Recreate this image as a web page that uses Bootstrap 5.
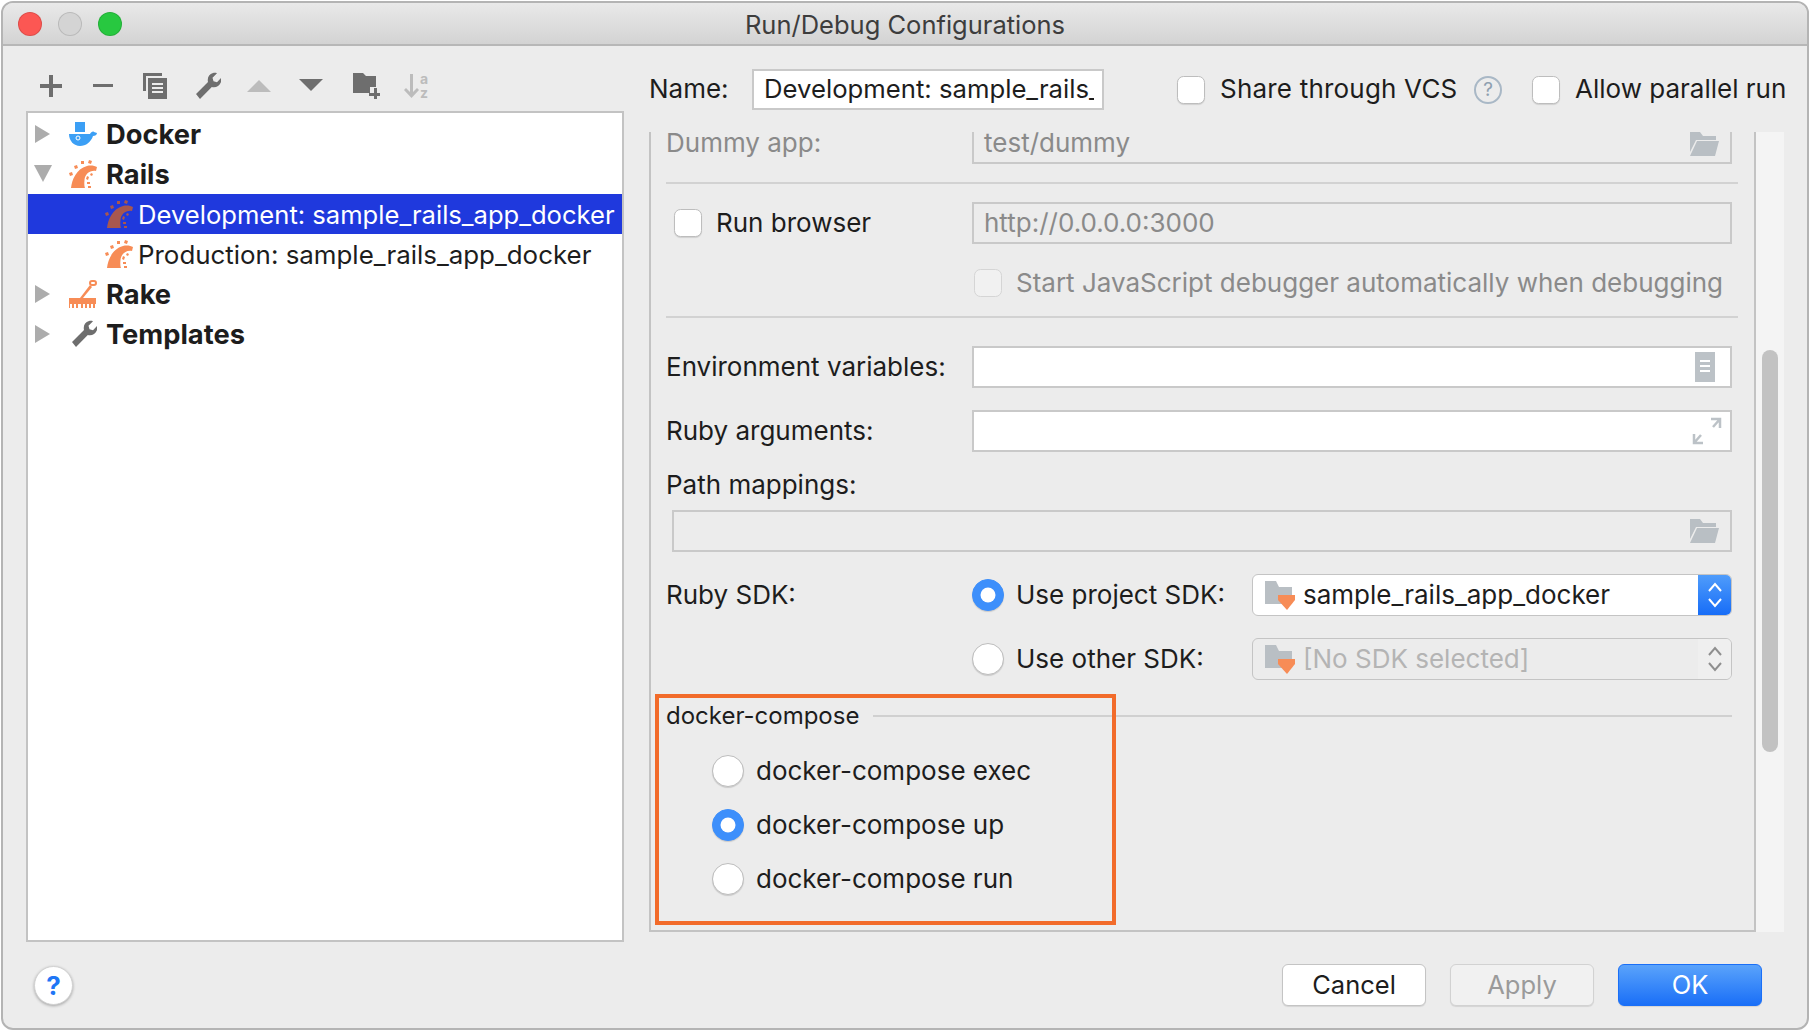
<!DOCTYPE html>
<html lang="en">
<head>
    <meta charset="UTF-8">
    <title>Run/Debug Configurations</title>
    <link href="https://cdn.jsdelivr.net/npm/bootstrap@5.3.2/dist/css/bootstrap.min.css" rel="stylesheet">
    <style>
        html, body { height: 100%; }
        body {
            background: #fff;
            font-family: Inter, "Liberation Sans", sans-serif;
            font-size: 26px;
            line-height: 30px;
            color: #1d1d1d;
            overflow: hidden;
        }
        .win-frame {
            margin: 1px;
            width: 1808px;
            height: 1029px;
            background: #ececec;
            border: 2px solid #b4b4b4;
            border-radius: 12px;
            overflow: hidden;
        }
        .title-strip {
            height: 43px;
            flex: none;
            background: linear-gradient(#e9e9e9, #d3d3d3);
            border-bottom: 2px solid #b7b7b7;
            position: relative;
        }
        .title-text { color: #3d3d3d; font-size: 25.5px; line-height: 43px; }
        .light-dots { position: absolute; left: 15px; top: 9px; gap: 16px; }
        .light-dot { width: 24px; height: 24px; border-radius: 50%; border: 1px solid rgba(0,0,0,.12); }
        .left-pane { width: 598px; margin-left: 23px; flex: none; }
        .tool-strip { height: 65px; padding: 26px 0 0 11px; gap: 24px; }
        .tool-strip svg { width: 28px; height: 28px; flex: none; }
        .tree-box {
            height: 831px;
            background: #fff;
            border: 2px solid #c3c3c3;
            padding-top: 1px;
        }
        .tree-row {
            height: 40px;
            padding: 2px 0 0 5px;
            border: 0;
            border-radius: 0 !important;
            background: transparent;
            color: #1d1d1d;
            font-size: 25.9px;
            line-height: 38px;
            white-space: nowrap;
        }
        .tree-row.is-parent { font-weight: 700; font-size: 27.3px; }
        .tree-row.is-leaf { padding-left: 77px; }
        .tree-row.is-picked { background: #1f39dd; color: #fff; font-size: 25.6px; }
        .tree-arrow { width: 20px; height: 20px; margin: -2px 16px 0 0; flex: none; }
        .tree-icon { width: 28px; height: 28px; margin: -2px 9px 0 0; flex: none; }
        .is-leaf .tree-icon { margin-right: 5px; }
        .right-pane { width: 1135px; margin-left: 25px; padding-top: 23px; flex: none; }
        .name-row { height: 41px; }
        .name-row > div { flex: none; white-space: nowrap; padding-bottom: 2px; }
        .name-label { width: 103px; }
        .name-field {
            width: 352px;
            height: 41px;
            flex: none;
            font-size: 25.7px;
            line-height: 30px;
            padding: 3px 8px 5px 10px;
            border: 2px solid #c9c9c9;
            border-radius: 0;
            color: #1d1d1d;
            overflow: hidden;
        }
        .mac-check {
            width: 28px;
            height: 28px;
            margin: 0;
            flex: none;
            background-color: #fff;
            border: 1px solid #bdbdbd;
            border-radius: 6px;
            box-shadow: 0 1px 1px rgba(0,0,0,.12);
        }
        .mac-check:disabled { background-color: #f1f1f1; border-color: #d5d5d5; opacity: 1; box-shadow: none; }
        .mac-radio {
            width: 32px;
            height: 32px;
            margin: 0;
            flex: none;
            background-color: #fff;
            border: 1px solid #bdbdbd;
            box-shadow: 0 1px 1px rgba(0,0,0,.15);
        }
        .mac-radio:checked { background-color: #3d8ffb; border-color: #3d8ffb; }
        .name-row > .hint-mark {
            width: 28px;
            height: 28px;
            padding: 0;
            border: 2px solid #a9b8c6;
            border-radius: 50%;
            color: #8fa0b0;
            font-size: 19px;
            line-height: 24px;
            text-align: center;
        }
        .vcs-label { width: 239px; letter-spacing: .2px; }
        .config-panel {
            height: 800px;
            margin-top: 22px;
            background: #f4f4f4;
        }
        .config-inner {
            width: 1107px;
            background: #ececec;
            border: 2px solid #c3c3c3;
            border-top: 0;
            padding-left: 15px;
        }
        .scroll-track { width: 28px; padding-left: 6px; padding-top: 218px; }
        .scroll-thumb { width: 16px; height: 402px; background: #c2c2c2; border-radius: 8px; }
        .row-label { width: 306px; flex: none; }
        .muted-text { color: #8a8a8a; }
        .plain-field {
            width: 760px;
            height: 42px;
            flex: none;
            border: 2px solid #c9c9c9;
            padding: 0 10px;
            line-height: 38px;
        }
        .plain-field.is-white { background: #fff; }
        .plain-field svg { width: 32px; height: 32px; }
        .dummy-field { height: 32px; border-top: 0; line-height: 22px; padding-top: 0; }
        .dummy-field svg { margin-top: -4px; }
        .dummy-row { line-height: 22px; }
        .sep-line { width: 1072px; height: 2px; background: #d2d2d2; margin-top: 18px; }
        .sdk-box {
            width: 480px;
            height: 42px;
            margin-left: auto;
            flex: none;
            background: #fff;
            border: 1px solid #c4c4c4;
            border-radius: 6px;
            overflow: hidden;
        }
        .sdk-box.is-off { background: #ececec; color: #b4b4b4; }
        .sdk-name { flex: 1; padding-left: 11px; line-height: 40px; gap: 7px; }
        .sdk-name svg { width: 32px; height: 32px; }
        .sdk-spin { width: 33px; background: linear-gradient(#4f9cfb, #176df7); }
        .sdk-box.is-off .sdk-spin { background: #efefef; }
        .sdk-spin svg { width: 20px; height: 30px; }
        .sdk-col { width: 760px; flex: none; gap: 12px; }
        .group-wrap { position: relative; height: 30px; margin-top: 21px; font-size: 24px; }
        .group-rule { height: 2px; background: #d0d0d0; width: 859px; margin-left: 14px; }
        .note-box {
            position: absolute;
            left: -11px;
            top: -7px;
            width: 461px;
            height: 231px;
            border: 4px solid #f26b2a;
        }
        .radio-row { height: 32px; margin-left: 46px; gap: 12px; }
        .foot-bar { height: 84px; padding: 2px 45px 0 31px; }
        .help-round {
            width: 39px;
            height: 39px;
            background: #fff;
            border-radius: 50%;
            border: 1px solid #d2d2d2;
            box-shadow: 0 1px 3px rgba(0,0,0,.3);
            color: #1f76f5;
            font-weight: 700;
            font-size: 26px;
            line-height: 37px;
            text-align: center;
        }
        .dlg-btn {
            width: 144px;
            height: 42px;
            padding: 0;
            font-size: 25.5px;
            line-height: 38px;
            border-radius: 6px;
            background: #fff;
            border: 1px solid #c4c4c4;
            color: #1d1d1d;
            box-shadow: 0 1px 1px rgba(0,0,0,.1);
        }
        .dlg-btn:disabled { background: #f1f1f1; color: #9a9a9a; border-color: #d2d2d2; opacity: 1; }
        .dlg-btn.btn-primary { background: linear-gradient(#5aa3fb, #1a6ff7); border-color: #1a6ff7; color: #fff; }
    </style>
</head>
<body>
    <svg width="0" height="0" class="position-absolute">
        <defs>
            <symbol id="ic-rails" viewBox="0 0 28 28">
                <path d="M2 28C3 20 7 9 18 6c4-1 8 0 10 1l-1 4c-6-1-11 3-11.500 9-.5 4 0 7 .5 8z"/>
                <path d="M0 13l3-1 1 3-3 1zM5 6l3-1 1 3-3 1zM12 1l3 0 0 3-3 0zM20 0l3 1-1 3-3-1zM22 13l2 1-1 2-2-1zM18 16l2 1-1 3-2-1zM18 22l3 0 0 2-3 0zM19 26l3 0 0 2-3 0z"/>
            </symbol>
            <symbol id="ic-wrench" viewBox="0 0 28 28">
                <path d="M3 22L15 10c-1-4 1-8 5-9 1.500-.4 3-.2 4 .2l-4.500 4.500 1 3.500 3.500 1L28 6c.4 1.500.4 3-.2 4.500-1.500 3.500-5 5.500-9 4.500L7 27z"/>
            </symbol>
            <symbol id="ic-open" viewBox="0 0 32 32">
                <path d="M2 4h10l3 4h13v4H8L2 24z" fill="#b9bfc4"/>
                <path d="M9 13h22l-4 15H2z" fill="#b9bfc4"/>
            </symbol>
            <symbol id="ic-sdk" viewBox="0 0 32 32">
                <path d="M1 2h11l3 6h13v17H1z" fill="#b9bfc4"/>
                <path d="M14 16h17v5l-8 10-9-10z" fill="#f78c56"/>
            </symbol>
            <symbol id="ic-spin" viewBox="0 0 20 30">
                <path d="M4 11l6-7 6 7M4 19l6 7 6-7" fill="none" stroke="currentColor" stroke-width="2"/>
            </symbol>
            <symbol id="ic-right" viewBox="0 0 20 20"><path d="M2 1l15 9-15 9z" fill="#acacac"/></symbol>
            <symbol id="ic-down" viewBox="0 0 20 20"><path d="M1 1h18l-9 17z" fill="#acacac"/></symbol>
        </defs>
    </svg>

    <div class="win-frame d-flex flex-column">
        <div class="title-strip text-center">
            <div class="light-dots d-flex">
                <div class="light-dot" style="background:#fc5753"></div>
                <div class="light-dot" style="background:#d4d4d4"></div>
                <div class="light-dot" style="background:#28c840"></div>
            </div>
            <div class="title-text">Run/Debug Configurations</div>
        </div>

        <div class="d-flex align-items-start">
            <div class="left-pane">
                <div class="tool-strip d-flex">
                    <svg viewBox="0 0 28 28" fill="#6e6e6e"><path d="M12 3h4v9h9v4h-9v9h-4v-9H3v-4h9z"/></svg>
                    <svg viewBox="0 0 28 28" fill="#6e6e6e"><path d="M4 12h20v3H4z"/></svg>
                    <svg viewBox="0 0 28 28" fill="#6e6e6e"><path d="M2 1h19v3H5v15H2z"/><path d="M7 6h19v21H7zM11 11v2h11v-2zM11 15v2h11v-2zM11 19v2h11v-2z" fill-rule="evenodd"/></svg>
                    <svg style="fill:#6e6e6e"><use href="#ic-wrench"/></svg>
                    <svg viewBox="0 0 28 28" fill="#bcbcbc"><path d="M2 20L14 8l12 12z"/></svg>
                    <svg viewBox="0 0 28 28" fill="#6e6e6e"><path d="M2 7h24L14 19z"/></svg>
                    <svg style="margin-left:3px" viewBox="0 0 28 28" fill="#6e6e6e"><path d="M1 1h10l3 3h10v11h-6v6H1z"/><path d="M23 18h3v5h3v3h-3v3h-3v-3h-5v-3h5z" transform="translate(-1 -2)"/></svg>
                    <svg viewBox="0 0 28 28" fill="#bcbcbc"><path d="M6 2h3v18l4-4 2 2-7.500 8L0 18l2-2 4 4z"/><text x="16" y="12" font-size="14" font-weight="700" font-family="Inter, sans-serif">a</text><text x="16" y="26" font-size="14" font-weight="700" font-family="Inter, sans-serif">z</text></svg>
                </div>
                <div class="tree-box">
                    <ul class="list-group">
                        <li class="list-group-item tree-row is-parent d-flex align-items-center">
                            <svg class="tree-arrow"><use href="#ic-right"/></svg>
                            <svg class="tree-icon" viewBox="0 0 28 28">
                                <path d="M6 2h10v10H6z" fill="#3b9ff5"/>
                                <path d="M0 14h21c1-2 3-3 4-2l3 1c0 2-2 3-4 3-2 6-7 10-13 10C5 26 0 21 0 14z" fill="#3b9ff5"/>
                                <circle cx="9" cy="18" r="2" fill="none" stroke="#fff"/>
                            </svg>
                            Docker
                        </li>
                        <li class="list-group-item tree-row is-parent d-flex align-items-center">
                            <svg class="tree-arrow"><use href="#ic-down"/></svg>
                            <svg class="tree-icon" style="fill:#f78c56"><use href="#ic-rails"/></svg>
                            Rails
                        </li>
                        <li class="list-group-item tree-row is-leaf is-picked d-flex align-items-center">
                            <svg class="tree-icon" style="fill:#a8574f"><use href="#ic-rails"/></svg>
                            Development: sample_rails_app_docker
                        </li>
                        <li class="list-group-item tree-row is-leaf d-flex align-items-center">
                            <svg class="tree-icon" style="fill:#f78c56"><use href="#ic-rails"/></svg>
                            Production: sample_rails_app_docker
                        </li>
                        <li class="list-group-item tree-row is-parent d-flex align-items-center">
                            <svg class="tree-arrow"><use href="#ic-right"/></svg>
                            <svg class="tree-icon" viewBox="0 0 28 28" fill="#f78c56">
                                <path d="M11 18L21 5l2 2-9 11z"/>
                                <rect x="21" y="1" width="6" height="4" rx="2" fill="none" stroke="#f78c56" stroke-width="2"/>
                                <path d="M0 18h27v6h-1v4h-2v-4h-2v4h-2v-4h-2v4h-2v-4h-2v4h-2v-4H9v4H7v-4H5v4H3v-4H1v4H0z"/>
                            </svg>
                            Rake
                        </li>
                        <li class="list-group-item tree-row is-parent d-flex align-items-center">
                            <svg class="tree-arrow"><use href="#ic-right"/></svg>
                            <svg class="tree-icon" style="fill:#6e6e6e"><use href="#ic-wrench"/></svg>
                            Templates
                        </li>
                    </ul>
                </div>
            </div>

            <div class="right-pane">
                <div class="name-row d-flex align-items-center">
                    <div class="name-label">Name:</div>
                    <input class="form-control name-field" type="text" value="Development: sample_rails_app_docker">
                    <input class="form-check-input mac-check" style="margin-left:73px" type="checkbox">
                    <div class="vcs-label" style="margin-left:15px">Share through VCS</div>
                    <div class="hint-mark" style="margin-left:15px">?</div>
                    <input class="form-check-input mac-check" style="margin-left:30px" type="checkbox">
                    <div style="margin-left:15px">Allow parallel run</div>
                </div>

                <div class="config-panel d-flex">
                    <div class="config-inner">
                        <div class="dummy-row d-flex">
                            <div class="row-label muted-text">Dummy app:</div>
                            <div class="plain-field dummy-field muted-text d-flex justify-content-between">
                                <span>test/dummy</span>
                                <svg><use href="#ic-open"/></svg>
                            </div>
                        </div>
                        <div class="sep-line"></div>

                        <div class="d-flex align-items-center" style="margin-top:18px">
                            <div class="row-label d-flex align-items-center gap-2">
                                <input class="form-check-input mac-check ms-2" type="checkbox">
                                <span style="margin-left:6px">Run browser</span>
                            </div>
                            <div class="plain-field muted-text">http://0.0.0.0:3000</div>
                        </div>
                        <div class="d-flex align-items-center" style="margin-top:25px;padding-left:308px;height:28px">
                            <input class="form-check-input mac-check" type="checkbox" disabled>
                            <span class="muted-text text-nowrap" style="margin-left:14px">Start JavaScript debugger automatically when debugging</span>
                        </div>
                        <div class="sep-line" style="margin-top:19px"></div>

                        <div class="d-flex align-items-center" style="margin-top:28px">
                            <div class="row-label">Environment variables:</div>
                            <div class="plain-field is-white d-flex justify-content-end align-items-center">
                                <svg viewBox="0 0 32 32"><path d="M7 1h20v30H7zM12 9v2h10V9zM12 14v2h10v-2zM12 19v2h10v-2z" fill="#bcc2c7" fill-rule="evenodd"/></svg>
                            </div>
                        </div>
                        <div class="d-flex align-items-center" style="margin-top:22px">
                            <div class="row-label">Ruby arguments:</div>
                            <div class="plain-field is-white d-flex justify-content-end align-items-center">
                                <svg style="margin-right:-3px" viewBox="0 0 32 32"><path d="M20 4h9v9M29 4l-7 8M12 28H3v-9M3 28l7-8" fill="none" stroke="#bcc2c7" stroke-width="2.500"/></svg>
                            </div>
                        </div>
                        <div style="margin-top:18px">Path mappings:</div>
                        <div class="plain-field d-flex justify-content-end align-items-center" style="margin:10px 0 0 6px;width:1060px">
                            <svg><use href="#ic-open"/></svg>
                        </div>

                        <div class="d-flex align-items-center" style="margin-top:22px;height:42px">
                            <div class="row-label">Ruby SDK:</div>
                            <div class="sdk-col d-flex align-items-center">
                                <input class="form-check-input mac-radio" type="radio" name="sdk" checked>
                                <span class="text-nowrap">Use project SDK:</span>
                                <div class="sdk-box d-flex">
                                    <div class="sdk-name d-flex align-items-center"><svg><use href="#ic-sdk"/></svg>sample_rails_app_docker</div>
                                    <div class="sdk-spin d-flex align-items-center justify-content-center text-white"><svg><use href="#ic-spin"/></svg></div>
                                </div>
                            </div>
                        </div>
                        <div class="d-flex align-items-center" style="margin-top:22px;height:42px">
                            <div class="row-label"></div>
                            <div class="sdk-col d-flex align-items-center">
                                <input class="form-check-input mac-radio" type="radio" name="sdk">
                                <span class="text-nowrap">Use other SDK:</span>
                                <div class="sdk-box is-off d-flex">
                                    <div class="sdk-name d-flex align-items-center"><svg><use href="#ic-sdk"/></svg>[No SDK selected]</div>
                                    <div class="sdk-spin d-flex align-items-center justify-content-center" style="color:#8f8f8f"><svg><use href="#ic-spin"/></svg></div>
                                </div>
                            </div>
                        </div>

                        <div class="group-wrap d-flex align-items-center">
                            <span class="text-nowrap">docker-compose</span>
                            <div class="group-rule"></div>
                            <div class="note-box"></div>
                        </div>
                        <div class="radio-row d-flex align-items-center" style="margin-top:24px">
                            <input class="form-check-input mac-radio" type="radio" name="mode">
                            <span>docker-compose exec</span>
                        </div>
                        <div class="radio-row d-flex align-items-center" style="margin-top:22px">
                            <input class="form-check-input mac-radio" type="radio" name="mode" checked>
                            <span>docker-compose up</span>
                        </div>
                        <div class="radio-row d-flex align-items-center" style="margin-top:22px">
                            <input class="form-check-input mac-radio" type="radio" name="mode">
                            <span>docker-compose run</span>
                        </div>
                    </div>
                    <div class="scroll-track"><div class="scroll-thumb"></div></div>
                </div>
            </div>
        </div>

        <div class="foot-bar d-flex align-items-center justify-content-between">
            <div class="help-round">?</div>
            <div class="d-flex" style="gap:24px">
                <button class="btn dlg-btn" type="button">Cancel</button>
                <button class="btn dlg-btn" type="button" disabled>Apply</button>
                <button class="btn btn-primary dlg-btn" type="button">OK</button>
            </div>
        </div>
    </div>
    <script src="https://cdn.jsdelivr.net/npm/bootstrap@5.3.2/dist/js/bootstrap.bundle.min.js"></script>
</body>
</html>
